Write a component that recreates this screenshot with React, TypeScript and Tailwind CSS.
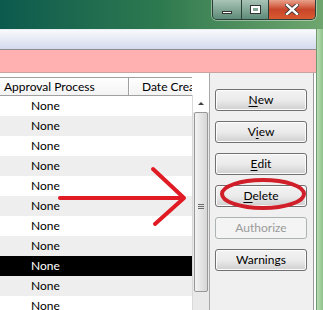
import React from 'react';

const rows = Array.from({ length: 11 }, (_, i) => i);

function Btn({ label, u, disabled }: { label: string; u?: number; disabled?: boolean }) {
  const text =
    u === undefined ? (
      label
    ) : (
      <>
        {label.slice(0, u)}
        <span className="underline underline-offset-2">{label[u]}</span>
        {label.slice(u + 1)}
      </>
    );
  if (disabled) {
    return (
      <div className="h-[22px] w-[92px] rounded-[3px] border border-[#adb2b5] bg-[#f4f4f4] flex items-center justify-center text-[#9a9a9a]">
        {text}
      </div>
    );
  }
  return (
    <div className="h-[22px] w-[92px] rounded-[3px] border border-[#707070] bg-gradient-to-b from-[#f2f2f2] via-[#ebebeb] to-[#cfcfcf] shadow-[inset_0_0_0_1px_#fcfcfc] flex items-center justify-center text-black">
      {text}
    </div>
  );
}

export default function App() {
  return (
    <div
      className="relative w-[323px] h-[310px] overflow-hidden bg-gradient-to-r from-[#0b5a4e] via-[#2e7a4f] to-[#6fa66f] text-[12px]"
      style={{ fontFamily: 'Lato, "Noto Sans", sans-serif' }}
    >
      {/* window chrome */}
      <div className="h-[29px] flex justify-end pr-[7px]">
        <div className="flex h-[20px] rounded-b-[5px] border border-t-0 border-[#2c3e38] overflow-hidden shadow-[0_0_0_1px_rgba(255,255,255,0.4)]">
          <div className="w-[29px] flex items-center justify-center bg-gradient-to-b from-[#a9c4b7] to-[#5e8a78] border-r border-[#2c3e38]">
            <div className="w-[10px] h-[3px] bg-white border border-[#333] mt-[5px]" />
          </div>
          <div className="w-[27px] flex items-center justify-center bg-gradient-to-b from-[#a9c4b7] to-[#5e8a78] border-r border-[#2c3e38]">
            <div className="w-[9px] h-[7px] border-[2px] border-white shadow-[0_0_0_1px_#333]" />
          </div>
          <div className="w-[46px] flex items-center justify-center bg-gradient-to-b from-[#e8a08a] via-[#c8452a] to-[#d85a30]">
            <svg width="14" height="11" viewBox="0 0 14 11">
              <path d="M2 1 L12 10 M12 1 L2 10" stroke="#333" strokeWidth="4" strokeLinecap="square" />
              <path d="M2 1 L12 10 M12 1 L2 10" stroke="#fff" strokeWidth="2.4" strokeLinecap="square" />
            </svg>
          </div>
        </div>
      </div>

      <div className="flex h-[281px]">
        {/* window body */}
        <div className="w-[316px] bg-white border-t border-[#e8eef0] flex flex-col">
          <div className="h-[20px] bg-gradient-to-b from-[#f8f9fc] to-[#d3daed] border-b border-[#8e8e8e]" />
          <div className="h-[23px] bg-[#ffb1b2] border-b border-[#c9a4a4]" />
          <div className="flex flex-1 min-h-0">
            {/* grid */}
            <div className="w-[210px] pt-[4px] border-r border-[#a8a8a8] bg-white">
              <div className="flex h-[19px] w-[192px] border-t border-b border-[#a0a0a0] bg-gradient-to-b from-white to-[#f3f3f3] text-black">
                <div className="w-[129px] border-r border-[#a0a0a0] shadow-[1px_0_0_#fff] pl-[4px] flex items-center whitespace-nowrap">
                  Approval Process
                </div>
                <div className="flex-1 pl-[13px] flex items-center whitespace-nowrap overflow-hidden">Date Created</div>
              </div>
              <div className="flex">
                <div className="w-[192px]">
                  {rows.map((i) => (
                    <div
                      key={i}
                      className={
                        'h-[20px] pl-[31px] flex items-center ' +
                        (i === 8 ? 'bg-black text-white' : i % 2 === 1 ? 'bg-[#eeeeee] text-black' : 'bg-white text-black')
                      }
                    >
                      None
                    </div>
                  ))}
                </div>
                <div className="w-[17px] bg-[#e9e9e9] border-l border-[#d8d8d8] flex flex-col -mt-[1px]">
                  <div className="h-[17px] flex items-center justify-center bg-white">
                    <div className="w-0 h-0 border-l-[3px] border-r-[3px] border-b-[3px] border-l-transparent border-r-transparent border-b-[#404040]" />
                  </div>
                  <div className="h-[180px] mx-[1px] rounded-[2px] border border-[#979797] bg-gradient-to-r from-[#f3f3f3] to-[#d6d6d6] flex items-center justify-center">
                    <div className="flex flex-col gap-[1px] mt-[8px]">
                      <div className="w-[6px] h-[1px] bg-[#6a6a6a]" />
                      <div className="w-[6px] h-[1px] bg-[#6a6a6a]" />
                      <div className="w-[6px] h-[1px] bg-[#6a6a6a]" />
                    </div>
                  </div>
                </div>
              </div>
            </div>
            {/* buttons */}
            <div className="w-[104px] bg-[#f0f0f0] border-r border-[#9a9a9a] flex flex-col gap-[10px] pl-[5px] pt-[16px]">
              <Btn label="New" u={0} />
              <Btn label="View" u={1} />
              <Btn label="Edit" u={0} />
              <Btn label="Delete" u={0} />
              <Btn label="Authorize" disabled />
              <Btn label="Warnings" />
            </div>
          </div>
        </div>
        <div className="w-[7px] flex">
          <div className="w-[1px] bg-[#6f9a70]" />
          <div className="flex-1 bg-gradient-to-r from-[#b9dcb5] to-[#8ec28a]" />
        </div>
      </div>

      {/* annotation */}
      <svg className="absolute inset-0 pointer-events-none" width="323" height="310" viewBox="0 0 323 310">
        <g stroke="#e01b24" strokeWidth="4" strokeLinecap="round" fill="none">
          <path d="M60 198 L183 198" />
          <path d="M153 169 L184 198 L155 224" strokeLinejoin="round" />
        </g>
        <ellipse cx="263" cy="194" rx="41" ry="14" stroke="#d11f2a" strokeWidth="4" fill="none" />
      </svg>
    </div>
  );
}
